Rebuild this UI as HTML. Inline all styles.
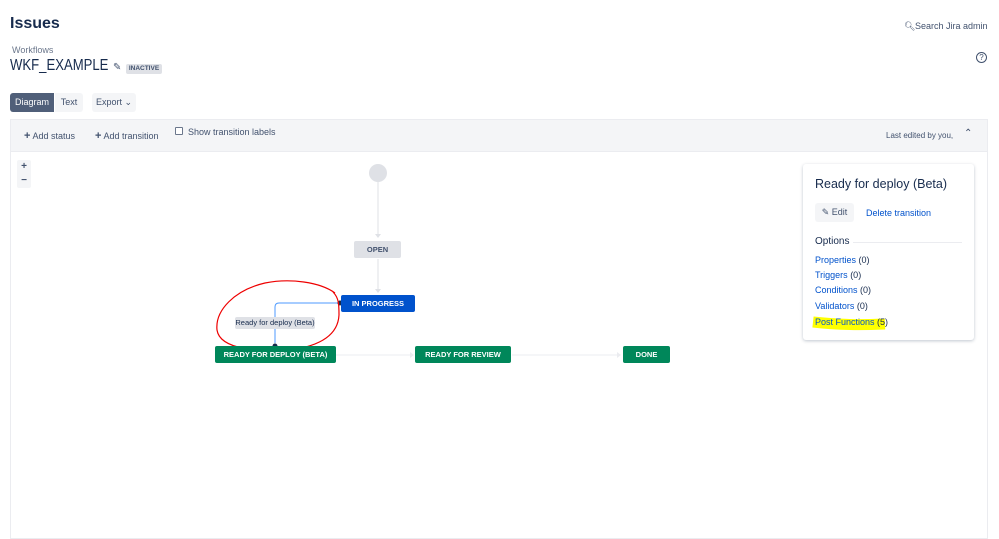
<!DOCTYPE html>
<html><head><style>
*{margin:0;padding:0;box-sizing:border-box}
body{width:999px;height:510px;background:#fff;font-family:"Liberation Sans",sans-serif;color:#172b4d;position:relative;overflow:hidden}
.a{position:absolute}
.st{position:absolute;height:17px;font-size:7.5px;font-weight:bold;color:#fff;display:flex;align-items:center;justify-content:center;border-radius:2px}
.lk{color:#0052cc;font-size:9px}
.gy{color:#42526e}
</style></head><body>
<div class="a" style="left:10px;top:15px;font-size:16px;font-weight:bold;color:#172b4d">Issues</div>
<div class="a" style="left:904px;top:21px;font-size:9px;color:#42526e">&#x1F50D;&#xFE0E;</div>
<div class="a" style="left:915px;top:21px;font-size:9px;color:#42526e">Search Jira admin</div>
<div class="a" style="left:976px;top:52px;width:11px;height:11px;border:1.3px solid #42526e;border-radius:50%;font-size:8px;text-align:center;line-height:9px;color:#42526e">?</div>
<div class="a" style="left:12px;top:45px;font-size:9px;color:#6b778c">Workflows</div>
<div class="a" style="left:10px;top:57px;font-size:16px;color:#172b4d;transform:scaleX(0.82);transform-origin:left top;white-space:nowrap">WKF_EXAMPLE</div>
<div class="a" style="left:113px;top:62px;font-size:10px;color:#42526e">&#9998;</div>
<div class="a" style="left:126px;top:64px;width:36px;height:10px;background:#dfe1e6;border-radius:2px;font-size:6.5px;font-weight:bold;color:#42526e;text-align:center;line-height:10px">INACTIVE</div>
<div class="a" style="left:10px;top:93px;width:44px;height:19px;background:#505f79;border-radius:3px 0 0 3px;color:#fff;font-size:9px;text-align:center;line-height:19px">Diagram</div>
<div class="a" style="left:55px;top:93px;width:28px;height:19px;background:#f4f5f7;border-radius:0 3px 3px 0;color:#42526e;font-size:9px;text-align:center;line-height:19px">Text</div>
<div class="a" style="left:92px;top:93px;width:44px;height:19px;background:#f4f5f7;border-radius:3px;color:#42526e;font-size:9px;text-align:center;line-height:19px">Export &#8964;</div>
<div class="a" style="left:10px;top:119px;width:978px;height:420px;border:1px solid #ebecf0"></div>
<div class="a" style="left:11px;top:120px;width:976px;height:32px;background:#f4f5f7;border-bottom:1px solid #ebecf0"></div>
<div class="a gy" style="left:24px;top:130px;font-size:9px"><b style="font-size:11px">+</b> Add status</div>
<div class="a gy" style="left:95px;top:130px;font-size:9px"><b style="font-size:11px">+</b> Add transition</div>
<div class="a" style="left:175px;top:127px;width:8px;height:8px;border:1px solid #6b778c;border-radius:1px;background:#fff"></div>
<div class="a gy" style="left:188px;top:127px;font-size:9px">Show transition labels</div>
<div class="a gy" style="left:886px;top:131px;font-size:8px">Last edited by you,</div>
<div class="a gy" style="left:964px;top:128px;font-size:10px">&#8963;</div>
<div class="a" style="left:17px;top:160px;width:14px;height:28px;background:#f4f5f7;border-radius:2px;font-size:10px;text-align:center;line-height:14px;color:#42526e;font-weight:bold">+<br>&minus;</div>
<svg class="a" style="left:0;top:0" width="999" height="510">
<circle cx="378" cy="173" r="9" fill="#dfe1e6"/>
<line x1="378" y1="182" x2="378" y2="236" stroke="#dfe1e6"/>
<polygon points="375,234 381,234 378,238" fill="#dfe1e6"/>
<line x1="378" y1="259" x2="378" y2="290" stroke="#dfe1e6"/>
<polygon points="375,289 381,289 378,293" fill="#dfe1e6"/>
<line x1="336" y1="355" x2="411" y2="355" stroke="#ebecf0"/>
<polygon points="410,352 414,355 410,358" fill="#ebecf0"/>
<line x1="512" y1="355" x2="618" y2="355" stroke="#ebecf0"/>
<polygon points="617,352 621,355 617,358" fill="#ebecf0"/>
<path d="M340,303 H279 Q275,303 275,307 V343" stroke="#4c9aff" fill="none"/>
<circle cx="340" cy="303" r="2.5" fill="#172b4d"/>
<circle cx="275" cy="346" r="2.5" fill="#172b4d"/>
<path d="M335,293 C320,282 290,278 265,283 C235,290 215,310 217,330 C220,350 260,352 290,350 C320,346 338,335 339,315 C339,305 339,298 333,292" stroke="#e00" stroke-width="1.2" fill="none"/>
</svg>
<div class="st" style="left:354px;top:241px;width:47px;background:#dfe1e6;color:#42526e">OPEN</div>
<div class="st" style="left:341px;top:295px;width:74px;background:#0052cc">IN PROGRESS</div>
<div class="a" style="left:235px;top:317px;width:80px;height:12px;background:#dfe1e6;border-radius:2px;font-size:7.5px;color:#172b4d;text-align:center;line-height:12px">Ready for deploy (Beta)</div>
<div class="st" style="left:215px;top:346px;width:121px;background:#00875a">READY FOR DEPLOY (BETA)</div>
<div class="st" style="left:415px;top:346px;width:96px;background:#00875a">READY FOR REVIEW</div>
<div class="st" style="left:623px;top:346px;width:47px;background:#00875a">DONE</div>
<div class="a" style="left:803px;top:164px;width:171px;height:176px;background:#fff;border-radius:3px;box-shadow:0 1px 3px rgba(9,30,66,.25)"></div>
<svg class="a" style="left:0;top:0" width="999" height="510"><path d="M813,322 C840,325 860,325 885,324" stroke="#ffff00" stroke-width="11" fill="none"/></svg>
<div class="a" style="left:815px;top:177px;font-size:12.5px;color:#172b4d">Ready for deploy (Beta)</div>
<div class="a" style="left:815px;top:203px;width:39px;height:19px;background:#f4f5f7;border-radius:3px;font-size:9px;color:#42526e;text-align:center;line-height:19px">&#9998; Edit</div>
<div class="a lk" style="left:866px;top:208px">Delete transition</div>
<div class="a" style="left:815px;top:236px;font-size:10px;color:#172b4d">Options</div>
<div class="a" style="left:853px;top:242px;width:109px;height:1px;background:#ebecf0"></div>
<div class="a lk" style="left:815px;top:255px">Properties <span style="color:#172b4d">(0)</span></div>
<div class="a lk" style="left:815px;top:270px">Triggers <span style="color:#172b4d">(0)</span></div>
<div class="a lk" style="left:815px;top:285px">Conditions <span style="color:#172b4d">(0)</span></div>
<div class="a lk" style="left:815px;top:301px">Validators <span style="color:#172b4d">(0)</span></div>
<div class="a lk" style="left:815px;top:317px">Post Functions <span style="color:#172b4d">(5)</span></div>
</body></html>
